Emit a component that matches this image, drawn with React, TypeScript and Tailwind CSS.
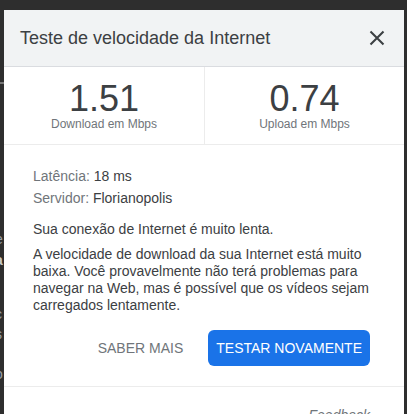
import React from "react";

export default function App() {
  return (
    <div className="relative w-[407px] h-[414px] overflow-hidden bg-[#2e2e2e] font-['Liberation_Sans',Arial,sans-serif]">
      {/* page content behind the dialog */}
      <div className="absolute left-[-6px] top-[82px] text-[14px] leading-[16px] text-[#9aa0a6]">
        <div className="h-[2px] w-[10px] bg-[#777]" />
      </div>
      <div className="absolute left-[-5px] top-[229px] text-[14px] text-[#9aa0a6]">e</div>
      <div className="absolute left-[-5px] top-[250px] text-[14px] font-bold text-[#c8c8c8]">a</div>
      <div className="absolute left-[-5px] top-[304px] text-[14px] text-[#9aa0a6]">c</div>
      <div className="absolute left-[-5px] top-[324px] text-[14px] text-[#9aa0a6]">s</div>
      <div className="absolute left-[-5px] top-[364px] text-[14px] text-[#9aa0a6]">o</div>

      {/* dialog */}
      <div className="absolute left-[4px] top-[10px] w-[400px] h-[420px] bg-white flex flex-col">
        <div className="h-[57px] bg-[#f1f3f4] border-b border-[#dadce0] flex items-center justify-between pl-[16px] pr-[19px]">
          <span className="text-[18px] leading-[24px] text-[#3c4043]">Teste de velocidade da Internet</span>
          <svg width="16" height="16" viewBox="0 0 16 16" className="text-[#3c4043]">
            <path d="M1.5 1.5 L14.5 14.5 M14.5 1.5 L1.5 14.5" stroke="currentColor" strokeWidth="2.1" fill="none" />
          </svg>
        </div>

        <div className="grid grid-cols-2 border-b border-[#ececec]">
          <div className="flex flex-col items-center pt-[15px] pb-[12px]">
            <span className="text-[36px] leading-[34px] text-[#3c4043]">1.51</span>
            <span className="text-[12px] leading-[16px] text-[#70757a]">Download em Mbps</span>
          </div>
          <div className="flex flex-col items-center pt-[15px] pb-[12px] border-l border-[#ececec]">
            <span className="text-[36px] leading-[34px] text-[#3c4043]">0.74</span>
            <span className="text-[12px] leading-[16px] text-[#70757a]">Upload em Mbps</span>
          </div>
        </div>

        <div className="pl-[29px] pr-[30px] pt-[20px] pb-[20px] border-b border-[#ececec] text-[14px] text-[#3c4043]">
          <div className="leading-[22px]">
            <span className="text-[#70757a]">Latência:</span> 18 ms
          </div>
          <div className="leading-[22px]">
            <span className="text-[#70757a]">Servidor:</span> Florianopolis
          </div>
          <div className="leading-[17px] mt-[12px]">Sua conexão de Internet é muito lenta.</div>
          <p className="leading-[17px] mt-[8px]">
            A velocidade de download da sua Internet está muito baixa. Você provavelmente não terá problemas para navegar na Web, mas é possível que os vídeos sejam carregados lentamente.
          </p>
          <div className="flex justify-end items-center mt-[16px] mr-[4px]">
            <button className="text-[14px] leading-[36px] text-[#70757a] pr-[25px]">SABER MAIS</button>
            <button className="h-[36px] px-[8px] rounded-[6px] bg-[#1a73e8] text-white text-[14px] leading-[36px]">
              TESTAR NOVAMENTE
            </button>
          </div>
        </div>

        <div className="flex justify-end pr-[34px] pt-[18px]">
          <span className="italic text-[14px] leading-[20px] text-[#70757a]">Feedback</span>
        </div>
      </div>
    </div>
  );
}
